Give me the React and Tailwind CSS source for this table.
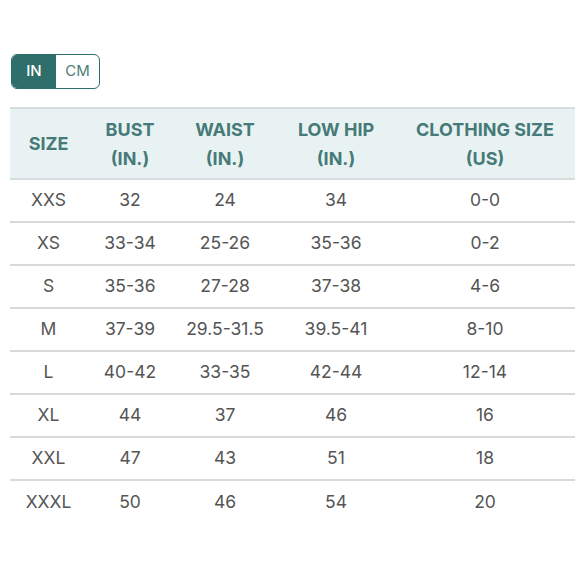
const rows = [
  ["XXS", "32", "24", "34", "0-0"],
  ["XS", "33-34", "25-26", "35-36", "0-2"],
  ["S", "35-36", "27-28", "37-38", "4-6"],
  ["M", "37-39", "29.5-31.5", "39.5-41", "8-10"],
  ["L", "40-42", "33-35", "42-44", "12-14"],
  ["XL", "44", "37", "46", "16"],
  ["XXL", "47", "43", "51", "18"],
  ["XXXL", "50", "46", "54", "20"],
];

const cols = "grid grid-cols-[77px_86px_104px_118px_180px]";

export default function App() {
  return (
    <div className="w-[580px] h-[580px] bg-white pt-[54px] pl-[10px] font-['Inter','Liberation_Sans',sans-serif]">
      <div className="ml-[1px] flex h-[35px] w-[89px] overflow-hidden rounded-[6px] border-[1.5px] border-[#2f6f6b] text-[15px]">
        <div className="flex w-[44px] items-center justify-center bg-[#2f6f6b] font-medium text-white">IN</div>
        <div className="flex flex-1 items-center justify-center text-[#4f7d7a]">CM</div>
      </div>

      <div className="mt-[18px] w-[565px]">
        <div className={`${cols} h-[73px] items-center border-t-2 border-b-2 border-[#d7dcdc] bg-[#e9f2f2] text-center text-[18px] font-bold leading-[29px] text-[#467a78]`}>
          <div>SIZE</div>
          <div>BUST<br />(IN.)</div>
          <div>WAIST<br />(IN.)</div>
          <div>LOW HIP<br />(IN.)</div>
          <div>CLOTHING SIZE<br />(US)</div>
        </div>
        {rows.map((r, i) => (
          <div
            key={r[0]}
            className={`${cols} h-[43px] items-center text-center text-[17.5px] text-[#555] ${i < rows.length - 1 ? "border-b-2 border-[#d9d9d9]" : ""}`}
          >
            {r.map((c, j) => (
              <div key={j}>{c}</div>
            ))}
          </div>
        ))}
      </div>
    </div>
  );
}
